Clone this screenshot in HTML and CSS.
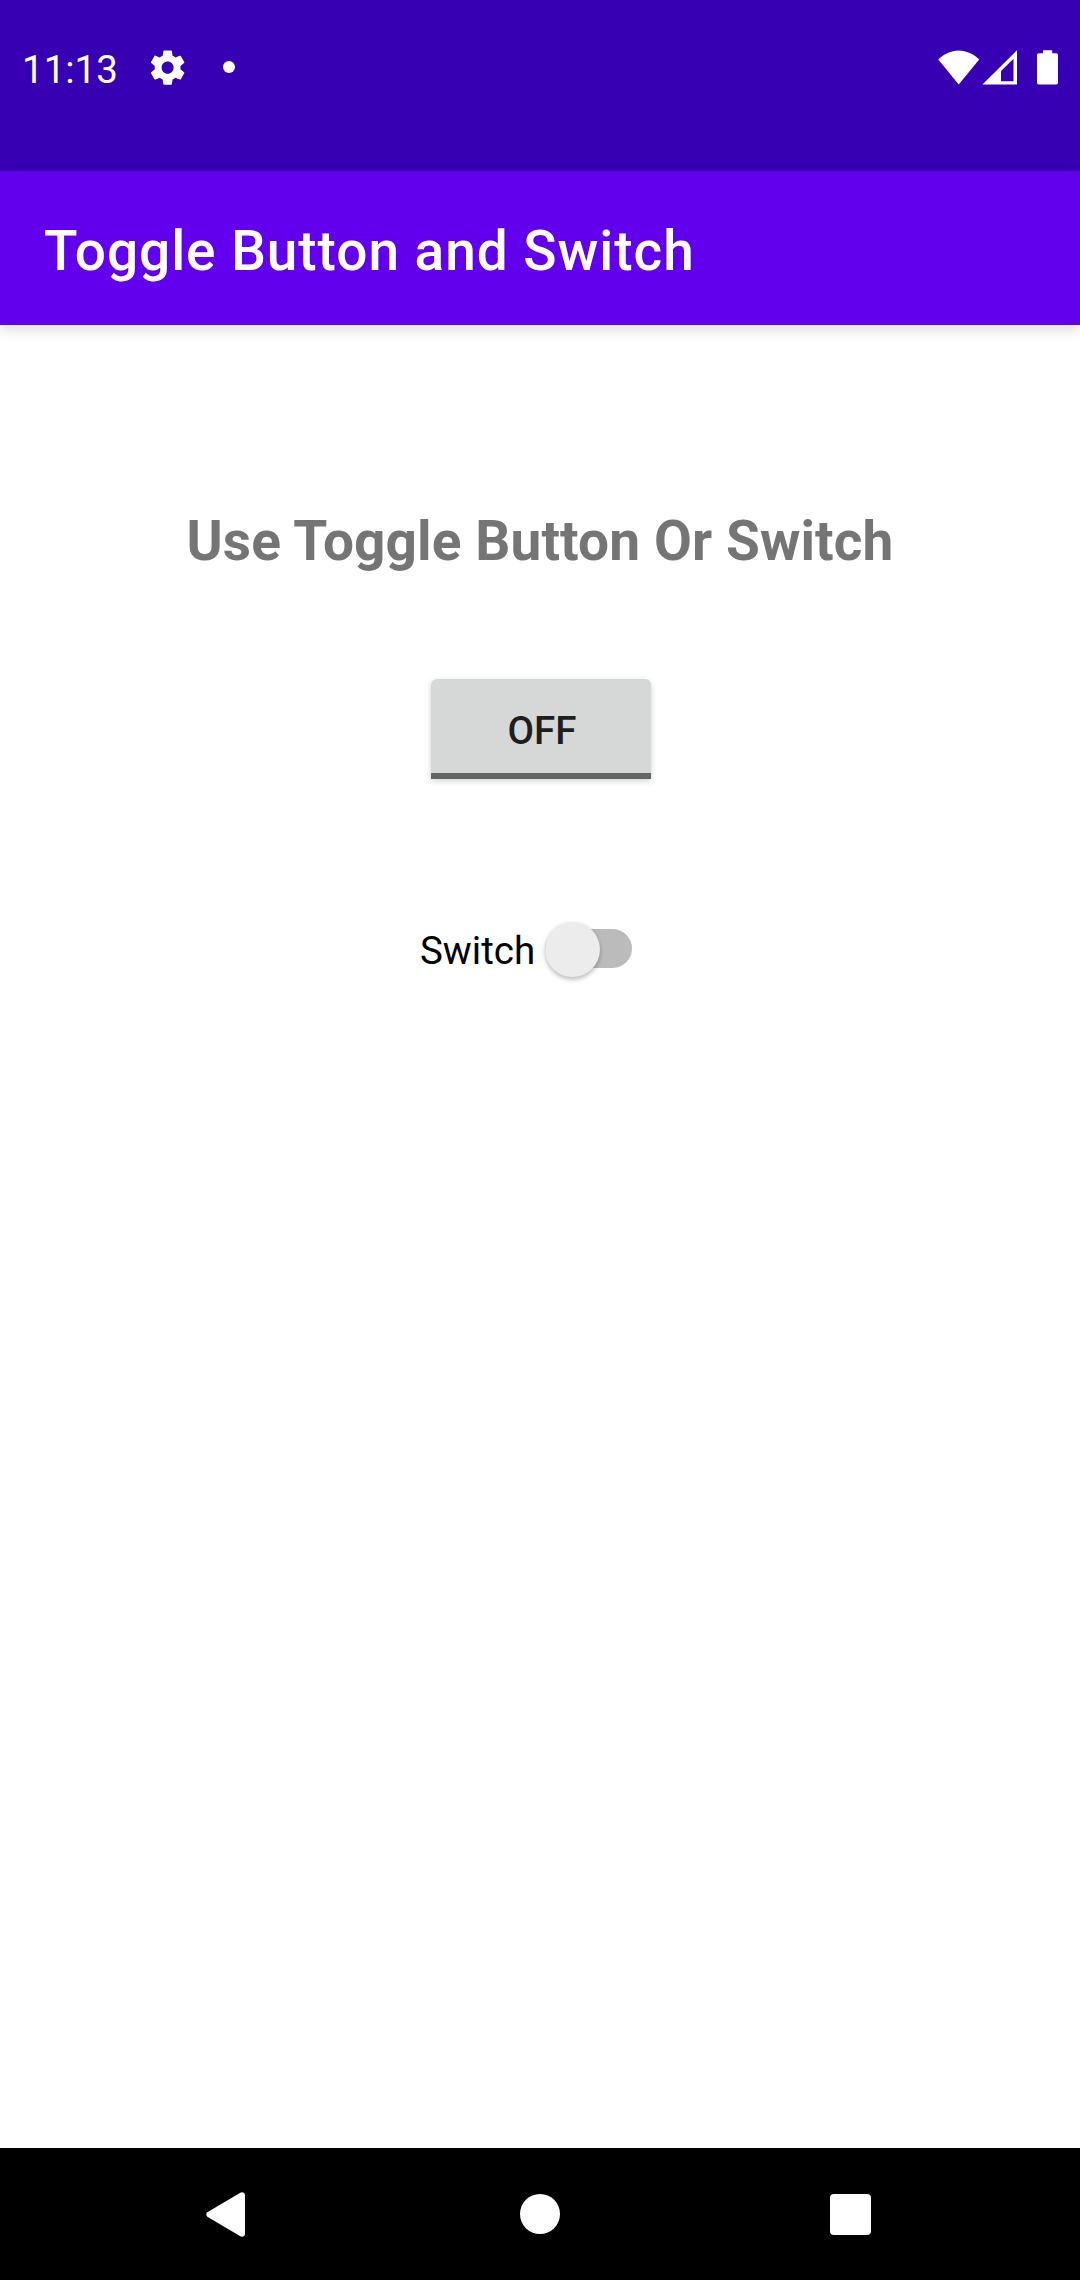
FILE: index.html
```html
<!DOCTYPE html>
<html lang="en">
<head>
<meta charset="utf-8">
<title>Toggle Button and Switch</title>
<link rel="stylesheet" href="styles.css">
</head>
<body>
<div class="screen">
  <div class="status-bar">
    <span class="clock">11:13</span>
    <svg class="gear" viewBox="0 0 24 24"><path d="M19.43 12.98c.04-.32.07-.64.07-.98s-.03-.66-.07-.98l2.11-1.65c.19-.15.24-.42.12-.64l-2-3.46c-.12-.22-.39-.3-.61-.22l-2.49 1c-.52-.4-1.08-.73-1.69-.98l-.38-2.65C14.46 2.18 14.25 2 14 2h-4c-.25 0-.46.18-.49.42l-.38 2.65c-.61.25-1.17.59-1.69.98l-2.49-1c-.23-.09-.49 0-.61.22l-2 3.46c-.13.22-.07.49.12.64l2.11 1.65c-.04.32-.07.65-.07.98s.03.66.07.98l-2.11 1.65c-.19.15-.24.42-.12.64l2 3.46c.12.22.39.3.61.22l2.49-1c.52.4 1.08.73 1.69.98l.38 2.65c.03.24.24.42.49.42h4c.25 0 .46-.18.49-.42l.38-2.65c.61-.25 1.17-.59 1.69-.98l2.49 1c.23.09.49 0 .61-.22l2-3.46c.12-.22.07-.49-.12-.64l-2.11-1.65zM12 15.5c-1.93 0-3.5-1.57-3.5-3.5s1.57-3.5 3.5-3.5 3.5 1.57 3.5 3.5-1.57 3.5-3.5 3.5z"/></svg>
    <span class="dot"></span>
    <svg class="wifi" width="42" height="36" viewBox="0 0 42 36"><path d="M.3 9.6C5.8 4 13 .5 20.7 .5S35.700 4 41.200 9.600L20.700 34.600z"/></svg>
    <svg class="signal" width="36" height="36" viewBox="0 0 36 36"><path fill-rule="evenodd" d="M.4 34.600L35 .3V34.600zM19 21V31.200H31.500V8.800z"/></svg>
    <svg class="battery" width="22" height="36" viewBox="0 0 22 36"><path d="M6 .2h9.200v3.100h4.100q1.700 0 1.700 1.700v27.800q0 1.700-1.700 1.700H1.700Q0 34.500 0 32.800V5q0-1.700 1.700-1.700H6z"/></svg>
  </div>
  <header class="app-bar"><h1 class="title">Toggle Button and Switch</h1></header>
  <main class="content">
    <h2 class="heading">Use Toggle Button Or Switch</h2>
    <button class="toggle" type="button">OFF</button>
    <div class="switch-row">
      <span class="switch-label">Switch</span>
      <span class="track"><span class="thumb"></span></span>
    </div>
  </main>
  <nav class="nav-bar">
    <svg class="back" width="40" height="46" viewBox="0 0 40 46"><path d="M1.300 20.300L33.900.9Q36.300-.3 38 .9Q39 1.700 39 3.200V41.800Q39 43.300 38 44.100Q36.300 45.300 33.900 44.100L1.300 24.700Q-.7 22.500 1.300 20.300z"/></svg>
    <span class="home"></span>
    <span class="recents"></span>
  </nav>
</div>
</body>
</html>
```
FILE: styles.css
```css
* { box-sizing: border-box; }

body {
  margin: 0;
  background: #fff;
  font-family: Roboto, "Liberation Sans", sans-serif;
}

svg { display: block; fill: #fff; flex: none; }

.screen {
  display: flex;
  flex-direction: column;
  width: 1080px;
  height: 2280px;
}

.status-bar {
  display: flex;
  align-items: flex-start;
  height: 171px;
  padding: 46px 22px 0;
  background: #3700b3;
}

.clock {
  width: 125px;
  font-size: 38.500px;
  line-height: 48px;
  color: #fff;
}

.gear { width: 41.25px; height: 41.25px; margin-top: 0.700px; margin-left: 0.400px; }

.dot {
  width: 12px;
  height: 12px;
  margin: 15px 0 0 34.350px;
  border-radius: 50%;
  background: #fff;
}

.wifi { margin: 4px 2px 0 auto; }
.signal { margin: 4px 19px 0 0; }
.battery { margin: 4px -1px 0 0; }

.app-bar {
  position: relative;
  height: 154px;
  padding: 48px 44px 0;
  background: #6200ee;
  box-shadow: 0 5px 12px rgba(0, 0, 0, 0.13);
}

.title {
  margin: 0;
  font-size: 55px;
  font-weight: 500;
  line-height: 64px;
  letter-spacing: 0.950px;
  white-space: nowrap;
  color: #fff;
}

.content {
  display: flex;
  flex: 1;
  flex-direction: column;
  align-items: center;
  padding-top: 184px;
}

.heading {
  margin: 0 0 106px;
  font-size: 55px;
  font-weight: 700;
  line-height: 64px;
  letter-spacing: 0.100px;
  white-space: nowrap;
  color: #757575;
}

.toggle {
  width: 220px;
  height: 100px;
  margin: 0 0 142px 2px;
  padding: 30px 0 20px 2px;
  border: 0;
  border-bottom: 6px solid #626562;
  border-radius: 6px 6px 0 0;
  background: #d6d8d7;
  box-shadow: 0 2px 6px rgba(0, 0, 0, 0.18);
  font-family: inherit;
  font-size: 38.500px;
  font-weight: 500;
  line-height: 44px;
  color: #1d1e1d;
}

.switch-row {
  display: flex;
  width: 240px;
  height: 55px;
}

.switch-label {
  width: 124.500px;
  padding-top: 8px;
  font-size: 38.500px;
  line-height: 44px;
  color: #000;
}

.track {
  width: 87.500px;
  height: 39px;
  margin-top: 8px;
  border-radius: 20px;
  background: #bbb;
}

.thumb {
  display: block;
  width: 55px;
  height: 55px;
  margin-top: -7.500px;
  border-radius: 50%;
  background: #ececec;
  box-shadow: 0 3px 4px rgba(0, 0, 0, 0.22), 0 0 4px rgba(0, 0, 0, 0.06);
}

.nav-bar {
  display: flex;
  align-items: flex-start;
  height: 132px;
  padding: 44px 208px 0 206px;
  background: #000;
}

.back { margin-right: 274px; }

.home {
  width: 40px;
  height: 40px;
  margin: 2px 270px 0 0;
  border-radius: 50%;
  background: #fff;
}

.recents {
  width: 41.300px;
  height: 41.300px;
  margin-top: 2px;
  border-radius: 4px;
  background: #fff;
}
```
